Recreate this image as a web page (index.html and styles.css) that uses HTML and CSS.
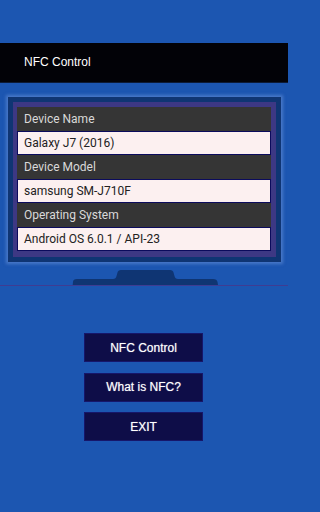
FILE: index.html
```html
<!DOCTYPE html>
<html>
<head>
<meta charset="utf-8">
<link rel="stylesheet" href="styles.css">
</head>
<body>
<div class="top-space"></div>
<header class="appbar">NFC Control</header>
<main class="screen">
  <div class="monitor">
    <div class="frame">
      <div class="bezel">
        <div class="row label">Device Name</div>
        <div class="row value">Galaxy J7 (2016)</div>
        <div class="row label">Device Model</div>
        <div class="row value">samsung SM-J710F</div>
        <div class="row label">Operating System</div>
        <div class="row value">Android OS 6.0.1 / API-23</div>
      </div>
    </div>
    <div class="stand">
      <svg width="150" height="16" viewBox="0 0 150 16">
        <path d="M2.7,16 L3,13 Q3,10 7,10 L43,10 Q46,10 46.5,7 L47.5,3.5 Q48,1 51,1 L100,1 Q103,1 103.5,3.5 L104.5,7 Q105,10 108,10 L143,10 Q147,10 147.5,13 L148,16 Z" fill="#0f3573"/>
      </svg>
    </div>
  </div>
  <div class="rule"></div>
  <nav class="buttons">
    <div class="btn">NFC Control</div>
    <div class="btn">What is NFC?</div>
    <div class="btn">EXIT</div>
  </nav>
</main>
</body>
</html>
```
FILE: styles.css
```css
html, body {
  margin: 0;
  padding: 0;
}
body {
  width: 288px;
  height: 512px;
  overflow: hidden;
  background: #1c56b1;
  font-family: "Liberation Sans", Arial, sans-serif;
}
.top-space {
  height: 43px;
}
.appbar {
  height: 39px;
  line-height: 39px;
  background: #020207;
  border-bottom: 1px solid #0c1a36;
  color: #ffffff;
  font-size: 12px;
  padding-left: 24px;
}
.screen {
  display: flex;
  flex-direction: column;
}
.monitor {
  display: flex;
  flex-direction: column;
  padding-top: 14px;
}
.frame {
  margin: 0 7px 0 8px;
  background: #0f3573;
  padding: 5px;
  box-shadow: 0 0 3px 2px rgba(110, 150, 220, 0.55);
}
.bezel {
  background: #3d3884;
  padding: 5px 5px 6px 4px;
  display: flex;
  flex-direction: column;
}
.row {
  height: 24px;
  box-sizing: border-box;
  font-family: Roboto, "Noto Sans", sans-serif;
  font-size: 12px;
  padding-left: 7px;
  display: flex;
  align-items: center;
}
.label {
  background: #353535;
  color: #d9d9d9;
}
.value {
  background: #fcf0f0;
  color: #222222;
  border: 1px solid #0b0b5c;
  padding-left: 6px;
}
.stand {
  display: flex;
  padding-left: 70px;
  margin-top: 7px;
}
.stand svg {
  display: block;
}
.rule {
  height: 1px;
  background: #3f3c92;
}
.buttons {
  display: flex;
  flex-direction: column;
  align-items: center;
  gap: 10.5px;
  margin-top: 47px;
}
.btn {
  width: 119px;
  height: 29px;
  box-sizing: border-box;
  margin-left: -1px;
  background: #0e0d48;
  border: 1px solid #16166a;
  color: #ffffff;
  font-size: 12px;
  display: flex;
  align-items: center;
  justify-content: center;
  text-shadow: 0 0 1px rgba(255, 255, 255, 0.6);
}
```
